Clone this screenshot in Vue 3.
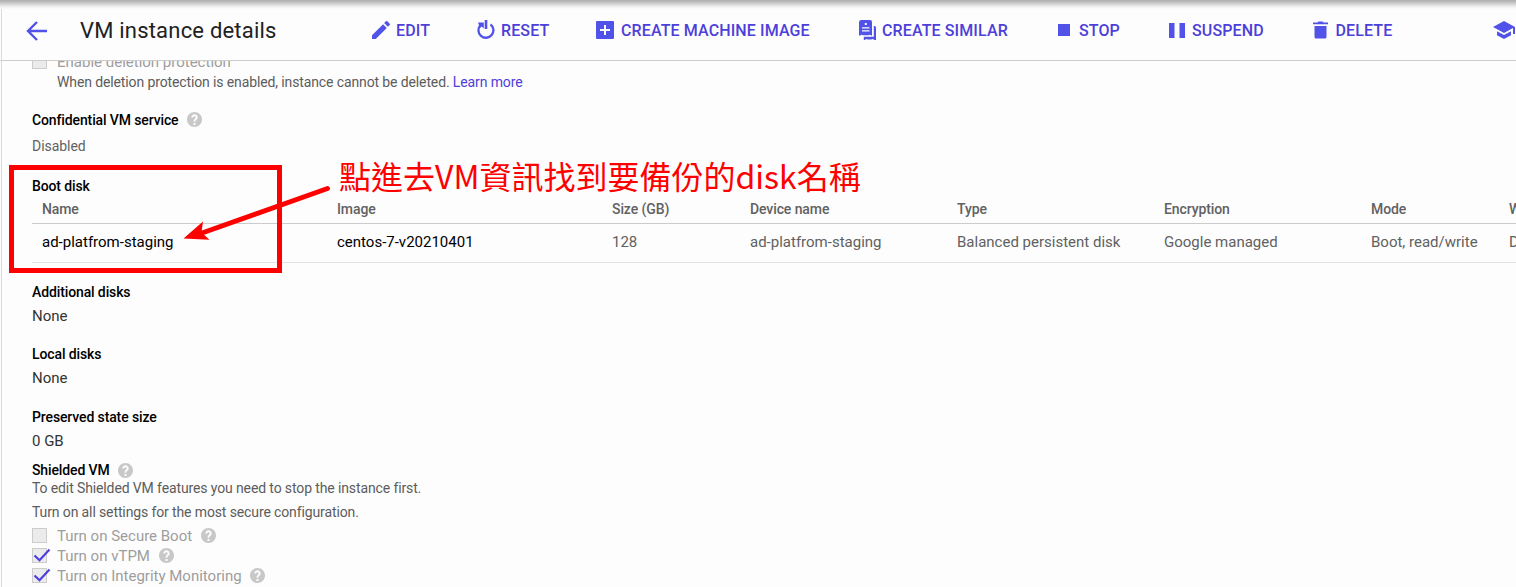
<script setup>
const actions = [
  { key: 'edit', label: 'EDIT' },
  { key: 'reset', label: 'RESET' },
  { key: 'image', label: 'CREATE MACHINE IMAGE' },
  { key: 'similar', label: 'CREATE SIMILAR' },
  { key: 'stop', label: 'STOP' },
  { key: 'suspend', label: 'SUSPEND' },
  { key: 'delete', label: 'DELETE' },
]
const columns = ['Name', 'Image', 'Size (GB)', 'Device name', 'Type', 'Encryption', 'Mode', 'When deleting instance']
const disk = ['ad-platfrom-staging', 'centos-7-v20210401', '128', 'ad-platfrom-staging', 'Balanced persistent disk', 'Google managed', 'Boot, read/write', 'Delete disk']
const facts = [
  { title: 'Additional disks', value: 'None', key: 'additional' },
  { title: 'Local disks', value: 'None', key: 'local' },
  { title: 'Preserved state size', value: '0 GB', key: 'preserved' },
]
const options = [
  { label: 'Turn on Secure Boot', checked: false },
  { label: 'Turn on vTPM', checked: true },
  { label: 'Turn on Integrity Monitoring', checked: true },
]
const helpPath = 'M12 2C6.48 2 2 6.48 2 12s4.48 10 10 10 10-4.48 10-10S17.52 2 12 2zm1.300 17.300h-2.600v-2.600h2.600v2.600zm2.070-7.750l-.9.92C13.45 12.9 13.300 13.5 13.300 15h-2.600v-.5c0-1.1.45-2.1 1.17-2.83l1.24-1.26c.37-.36.39-.86.39-1.41 0-.8-.7-1.500-1.500-1.500s-1.600.7-1.600 1.700H7.800c0-2.410 1.890-4.200 4.200-4.200s4.200 1.79 4.200 4.200c0 .88-.26 1.68-.83 2.350z'
</script>

<template>
  <div class="page">
    <header class="toolbar">
      <svg class="back" viewBox="0 0 22 22"><path d="M21 11H2.5M11 2L2 11l9 9" fill="none" stroke="#5153e8" stroke-width="2.4" /></svg>
      <h1>VM instance details</h1>
      <nav class="actions">
        <button v-for="a in actions" :key="a.key" :class="['action', a.key]">
          <svg v-if="a.key === 'edit'" viewBox="0 0 24 24"><path d="M3 17.25V21h3.75L17.81 9.94l-3.75-3.75L3 17.25zM20.71 7.04a1 1 0 000-1.41l-2.34-2.34a1 1 0 00-1.41 0l-1.83 1.83 3.75 3.75 1.83-1.83z" /></svg>
          <svg v-else-if="a.key === 'reset'" viewBox="0 0 18 19"><path d="M13.500 4.300A7.500 7.500 0 1 1 3.600 5" fill="none" stroke="#5153e8" stroke-width="2.3" /><path d="M7.700 0h2.600v9H7.700zM1 2.500h5.800v6L4.700 6.400 3 8z" /></svg>
          <svg v-else-if="a.key === 'image'" viewBox="0 0 18 18"><path fill-rule="evenodd" d="M1 0h16q1 0 1 1v16q0 1-1 1H1q-1 0-1-1V1q0-1 1-1zm7 4v4H4v2h4v4h2v-4h4V8h-4V4z" /></svg>
          <svg v-else-if="a.key === 'similar'" viewBox="0 0 18 20"><path fill-rule="evenodd" d="M2.500 0h8.500q2 0 2 2v13.500h-1q-1-1.500-2.500-.3H4Q2.500 14 1.500 15.500H.5Q0 15.500 0 15V2q0-2 2.500-2zM5.800 3v2h2V3zM3 7.300v1.200h7.500V7.300zm0 2.900v1.200h7.500v-1.200z" /><path d="M14.800 6H15.500q1.500 0 1.500 1.500V20h-1.700q-1.500-1.600-3-.5H8.500Q7 18.400 6 20H4.800v-3.300h10z" /></svg>
          <svg v-else-if="a.key === 'stop'" viewBox="0 0 12 12"><path d="M0 0h12v12H0z" /></svg>
          <svg v-else-if="a.key === 'suspend'" viewBox="0 0 16 15"><path d="M0 0h5.500v15H0zM10.500 0H16v15h-5.500z" /></svg>
          <svg v-else viewBox="0 0 15 18"><path d="M1.500 5h12v11q0 1.500-1.500 1.500H3Q1.500 17.500 1.500 16V5zM0 1.500h4.500L5.500.5h4l1 1H15V3.300H0z" /></svg>
          <span>{{ a.label }}</span>
        </button>
      </nav>
      <svg class="learn" viewBox="0 0 22 18"><path d="M4 10.200v4L11 18l7-3.800v-4L11 14zM11 0L0 6l11 6 9-4.900V13h2V6z" /></svg>
    </header>

    <main class="details">
      <div class="option cut"><i class="box"></i><span class="deletion">Enable deletion protection</span></div>
      <p class="hint note">When deletion protection is enabled, instance cannot be deleted. <a>Learn more</a></p>
      <h2 class="confidential">Confidential VM service<svg class="help" viewBox="2 2 20 20"><path :d="helpPath" /></svg></h2>
      <p class="disabled">Disabled</p>

      <section class="boot">
        <h2>Boot disk</h2>
        <div class="row head"><span v-for="c in columns" :key="c">{{ c }}</span></div>
        <div class="row body"><span v-for="(c, i) in disk" :key="i" :class="{ link: i < 2 }">{{ c }}</span></div>
        <div class="highlight"></div>
        <svg class="arrow" viewBox="0 0 150 60"><path d="M145.500 6.500L20 51" stroke="#f00" stroke-width="5" stroke-linecap="round" fill="none" /><path d="M1.500 56.500L21 39.500L19.500 50.500L27.500 57.800z" fill="#f00" /></svg>
        <p class="callout">點進去VM資訊找到要備份的disk名稱</p>
      </section>

      <section v-for="f in facts" :key="f.key" :class="['fact', f.key]">
        <h2>{{ f.title }}</h2>
        <p>{{ f.value }}</p>
      </section>

      <section class="shielded">
        <h2>Shielded VM<svg class="help" viewBox="2 2 20 20"><path :d="helpPath" /></svg></h2>
        <p class="note">To edit Shielded VM features you need to stop the instance first.</p>
        <p class="note secure">Turn on all settings for the most secure configuration.</p>
        <div v-for="o in options" :key="o.label" class="option">
          <i class="box"><svg v-if="o.checked" viewBox="0 0 18 15"><path d="M1.500 7.500l5 4.800L16.500 1.500" fill="none" stroke="#4f3fe0" stroke-width="2.200" /></svg></i>
          <span>{{ o.label }}</span>
          <svg class="help" viewBox="2 2 20 20"><path :d="helpPath" /></svg>
        </div>
      </section>
    </main>
  </div>
</template>

<style>
body { margin: 0; overflow: hidden; }
</style>

<style scoped>
.page { position: relative; box-sizing: border-box; width: 1516px; height: 587px; overflow: hidden; background: #fdfdfd; font-family: Roboto, "Noto Sans CJK TC", sans-serif; color: #000; }
.page::before { content: ""; position: absolute; z-index: 2; left: 0; right: 0; top: 0; height: 9px; background: linear-gradient(#adadad, #c9c9c9 35%, #f0f0f0 75%, #fdfdfd); }
.page::after { content: ""; position: absolute; left: 1px; top: 0; width: 1px; height: 587px; background: #d9d9d9; }
h1, h2, p { margin: 0; font-weight: 400; }
.toolbar { display: flex; align-items: center; box-sizing: border-box; height: 61px; padding-top: 2px; border-bottom: 1px solid #ccc; background: #fdfdfd; }
.back { width: 22px; height: 22px; margin-left: 26px; flex: none; }
h1 { width: 291px; margin-left: 32px; font-size: 22px; line-height: 28px; letter-spacing: .2px; color: #212121; white-space: nowrap; flex: none; }
.actions { display: flex; height: 58px; flex: none; }
.action { display: flex; align-items: center; padding: 0; border: 0; background: none; font: 500 16px/20px Roboto, sans-serif; letter-spacing: .12px; color: #4d3fd9; white-space: nowrap; }
.action svg { flex: none; fill: #5153e8; }
.edit { width: 106px; } .edit svg { width: 24px; height: 24px; margin: -2px 3.500px 0 -2.500px; }
.reset { width: 119px; } .reset svg { width: 18px; height: 19px; margin: -3px 6px 0 0; }
.image { width: 262px; } .image svg { width: 18px; height: 18px; margin: -2px 7px 0 0; }
.similar { width: 200px; } .similar svg { width: 18px; height: 20px; margin: -2px 5px 0 1px; }
.stop { width: 110px; } .stop svg { width: 12px; height: 12px; margin: -2px 9px 0 0; }
.suspend { width: 144px; } .suspend svg { width: 16px; height: 15px; margin: -1px 7.500px 0 .5px; }
.delete { width: 181px; } .delete svg { width: 15px; height: 18px; margin: -2px 8px 0 .5px; }
.learn { flex: none; width: 22px; height: 18px; margin-top: -2px; fill: #5153e8; }
.details { height: 526px; overflow: hidden; padding-left: 32px; }
.option { display: flex; align-items: center; height: 20px; font-size: 15px; color: #9e9e9e; }
.cut { margin-top: -9px; }
.box { position: relative; box-sizing: border-box; width: 15px; height: 15px; margin: -1px 10px 0 0; border: 1px solid #ccc; background: #ebebeb; flex: none; }
.box svg { position: absolute; left: 0; top: -1px; width: 18px; height: 15px; }
.help { width: 15px; height: 15px; margin: -1px 0 0 8.600px; fill: #c8c8c8; flex: none; }
.note { font-size: 14px; line-height: 18px; letter-spacing: -.12px; color: #5c5c5c; }
.hint { margin-left: 25px; line-height: 20px; }
.hint a { color: #4d3fd9; }
h2 { display: flex; align-items: center; font-size: 14px; line-height: 20px; font-weight: 500; letter-spacing: -.12px; }
h2 .help { margin-left: 8px; }
.confidential { margin-top: 18px; }
.disabled { margin-top: 6px; font-size: 14px; line-height: 20px; letter-spacing: -.04px; color: #616161; }
.boot { position: relative; width: 1484px; height: 107px; padding-top: 20px; }
.row { display: grid; grid-template-columns: 295px 275px 138px 207px 207px 207px 138px 200px; width: 1484px; box-sizing: border-box; padding-left: 10px; white-space: nowrap; overflow: hidden; }
.head { height: 28px; line-height: 26px; font-size: 14px; font-weight: 500; letter-spacing: -.1px; color: #616161; border-bottom: 1px solid #ccc; }
.body { height: 39px; line-height: 37px; font-size: 15px; color: #616161; border-bottom: 1px solid #e3e3e3; }
.link { color: #000; }
.highlight { position: absolute; left: -23px; top: 9px; width: 263px; height: 98px; border: 5px solid #f00; }
.arrow { position: absolute; left: 150px; top: 26px; width: 150px; height: 60px; }
.callout { position: absolute; left: 307px; top: -3px; font: 400 32px/44px "Noto Sans CJK TC", sans-serif; color: #f00; white-space: nowrap; }
.fact p { margin-top: 4px; font-size: 15px; line-height: 20px; color: #333; }
.additional { margin-top: -1px; } .local { margin-top: 18px; } .preserved { margin-top: 19px; }
.shielded { margin-top: 10px; }
.shielded h2 { line-height: 18px; }
.shielded h2 .help { margin-top: 0; }
.secure { margin: 6px 0 5px; }
</style>
